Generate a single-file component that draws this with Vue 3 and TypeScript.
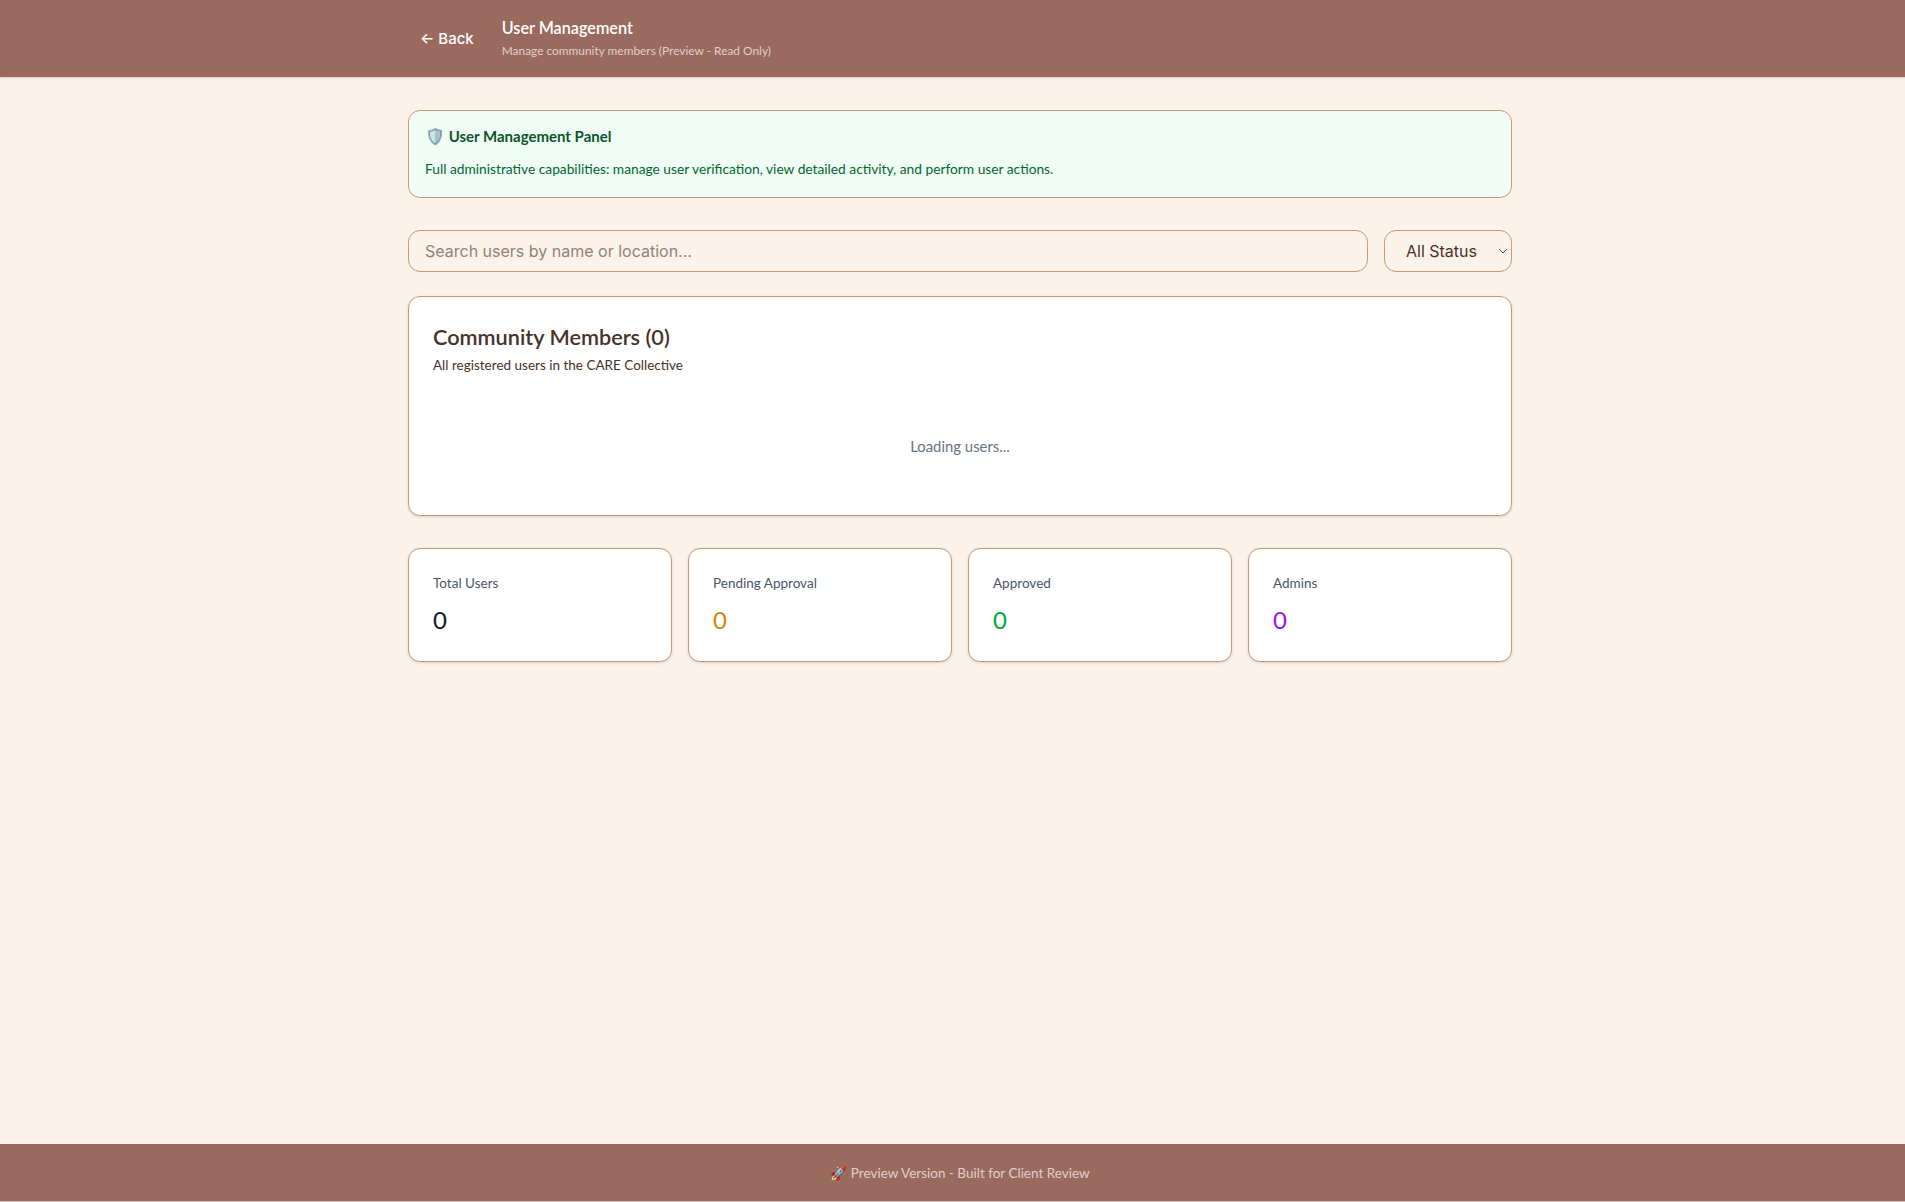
<script setup lang="ts">
const stats = [
  { label: 'Total Users', value: 0, tone: 'tone-dark' },
  { label: 'Pending Approval', value: 0, tone: 'tone-amber' },
  { label: 'Approved', value: 0, tone: 'tone-green' },
  { label: 'Admins', value: 0, tone: 'tone-purple' },
]
</script>

<template>
  <div class="page">
    <header class="topbar">
      <div class="topbar-in">
        <button class="back">← Back</button>
        <div class="heading">
          <h1 class="title">User Management</h1>
          <p class="subtitle">Manage community members (Preview - Read Only)</p>
        </div>
      </div>
    </header>

    <main class="main">
      <section class="notice">
        <div class="notice-hd"><span class="emoji">🛡️</span> User Management Panel</div>
        <p class="notice-txt">Full administrative capabilities: manage user verification, view detailed activity, and perform user actions.</p>
      </section>

      <div class="filters">
        <input class="search" placeholder="Search users by name or location..." />
        <div class="status-wrap">
          <select class="status"><option>All Status</option></select>
          <svg class="chevron" width="12" height="12" viewBox="0 0 24 24" fill="none" stroke="currentColor" stroke-width="2" stroke-linecap="round" stroke-linejoin="round"><path d="m5 9 7 7 7-7"/></svg>
        </div>
      </div>

      <section class="card members">
        <h2 class="members-title">Community Members (0)</h2>
        <p class="members-sub">All registered users in the CARE Collective</p>
        <div class="loading">Loading users...</div>
      </section>

      <div class="stats">
        <div v-for="s in stats" :key="s.label" class="card stat">
          <div class="stat-label">{{ s.label }}</div>
          <div class="stat-value" :class="s.tone">{{ s.value }}</div>
        </div>
      </div>
    </main>

    <footer class="footer">🚀 Preview Version - Built for Client Review</footer>
  </div>
</template>

<style>
html, body { margin: 0; background: #fbf2e9; overflow: hidden; }
</style>

<style scoped>
.page { width: 1920px; height: 1202px; display: flex; flex-direction: column; background: #fbf2e9; font-family: Lato, "Noto Sans", sans-serif; color: #483129; }
.topbar { height: 78px; background: #9a6a5f; border-bottom: 1px solid #e0d2c5; box-shadow: 0 1px 2px rgba(0,0,0,.05); box-sizing: border-box; flex-shrink: 0; }
.topbar-in { width: 1152px; margin: 0 auto; padding: 0 24px; box-sizing: border-box; height: 100%; display: flex; align-items: center; gap: 16px; }
.back { height: 36px; padding: 0 12px; border: none; background: transparent; color: #fff; font: 500 15px Inter, sans-serif; }
.heading { padding-bottom: 3px; }
.title { margin: 0; font-size: 16.2px; font-weight: 600; color: #fff; line-height: 24px; }
.subtitle { margin: 3px 0 0; font-size: 11.9px; color: #e0cfc8; line-height: 16px; }
.main { flex: 1; width: 1152px; margin: 0 auto; padding: 32px 24px; box-sizing: border-box; }
.notice { height: 88px; box-sizing: border-box; padding: 13px 16px; background: #f0fdf4; border: 1px solid #c9996f; border-radius: 12px; }
.notice-hd { font-size: 15px; font-weight: 700; color: #0d542b; line-height: 24px; }
.emoji { font-size: 16px; }
.notice-txt { margin: 11px 0 0; font-size: 13.75px; color: #016630; line-height: 20px; }
.filters { display: flex; gap: 16px; margin-top: 32px; }
.search { flex: 1; height: 42px; box-sizing: border-box; padding: 0 16px; border: 1px solid #c9996f; border-radius: 12px; background: #fbf2e9; font: 16px Inter, sans-serif; color: #483129; outline: none; }
.search::placeholder { color: #8f8379; }
.status-wrap { position: relative; width: 128px; height: 42px; }
.status { appearance: none; width: 100%; height: 100%; box-sizing: border-box; padding: 0 16px 0 21px; border: 1px solid #c9996f; border-radius: 12px; background: #fbf2e9; font: 16px Inter, sans-serif; color: #483129; outline: none; }
.chevron { position: absolute; right: 3px; top: 15px; color: #5a463d; pointer-events: none; }
.card { background: #fff; border: 1px solid #c9996f; border-radius: 12px; box-shadow: 0 1px 3px rgba(0,0,0,.14); box-sizing: border-box; }
.members { height: 220px; margin-top: 24px; padding: 24px; }
.members-title { margin: 0; font-size: 21.7px; font-weight: 600; line-height: 32px; }
.members-sub { margin: 2px 0 0; font-size: 13.5px; line-height: 20px; }
.loading { margin-top: 62px; text-align: center; font-size: 14.9px; color: #6a7282; }
.stats { display: grid; grid-template-columns: repeat(4, 1fr); gap: 16px; margin-top: 32px; }
.stat { height: 114px; padding: 24px; }
.stat-label { font-size: 13.5px; color: #4a5565; line-height: 20px; }
.stat-value { margin-top: 11px; font-size: 24px; line-height: 32px; }
.tone-dark { color: #101828; }
.tone-amber { color: #d08700; }
.tone-green { color: #00a63e; }
.tone-purple { color: #9810fa; }
.footer { height: 58px; box-sizing: border-box; border-bottom: 1px solid #d9c2b8; flex-shrink: 0; display: flex; align-items: center; justify-content: center; background: #9a6a5f; color: #e0cfc8; font-size: 13.5px; }
</style>
